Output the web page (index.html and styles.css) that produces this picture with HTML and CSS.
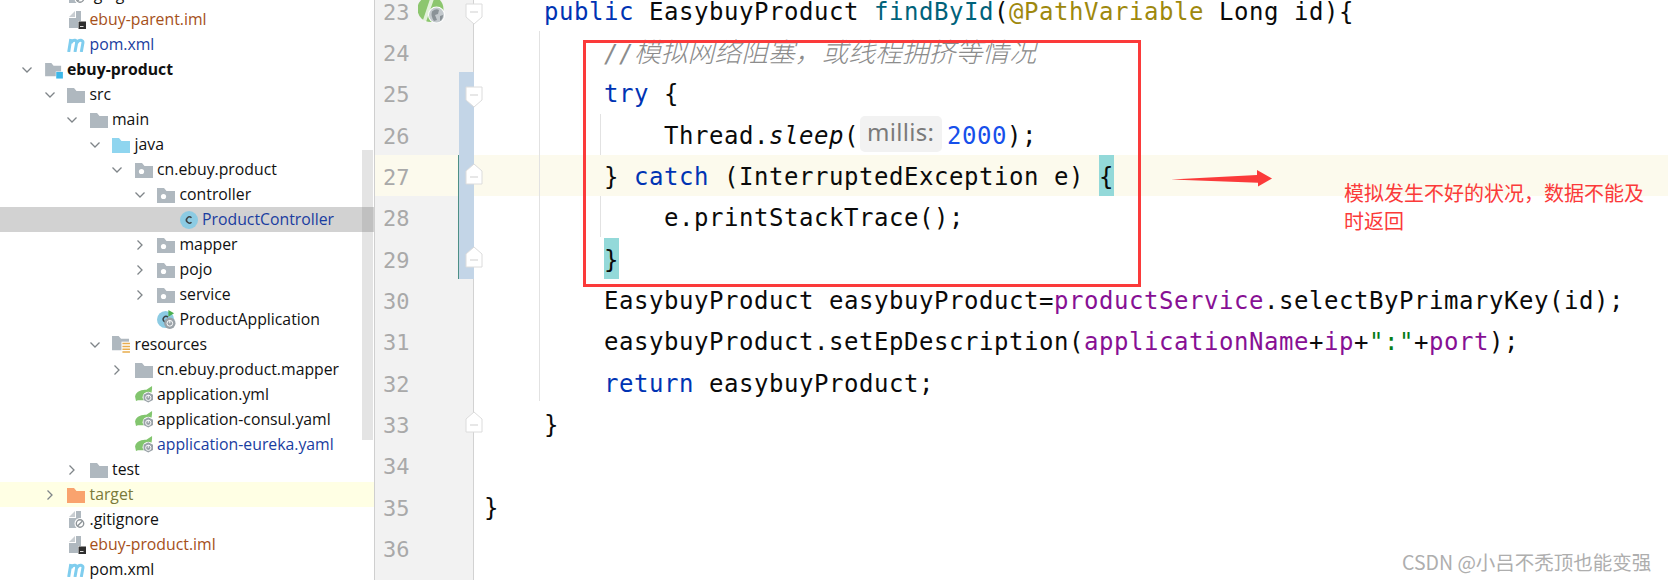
FILE: index.html
```html
<!DOCTYPE html>
<html lang="zh-CN">
<head>
<meta charset="utf-8">
<title>ProductController</title>
<link rel="stylesheet" href="styles.css">
</head>
<body>
<svg class="sprite" aria-hidden="true">
  <symbol id="open" viewBox="0 0 10 10"><path d="M.5 2.5 5 7 9.500 2.500" fill="none" stroke="#7f8589" stroke-width="1.300"/></symbol>
  <symbol id="closed" viewBox="0 0 10 10"><path d="M2.500.5 7 5 2.500 9.500" fill="none" stroke="#7f8589" stroke-width="1.300"/></symbol>
  <symbol id="folder" viewBox="0 0 18 16"><path d="M0 1h7l2.500 3H18v12H0z" fill="#afb8bf"/></symbol>
  <symbol id="module" viewBox="0 0 20 18"><path d="M0 0h7l2.500 3H18v12H0z" fill="#afb8bf"/><rect x="12" y="9.500" width="8" height="8" fill="#fff"/><rect x="12.500" y="10" width="7.500" height="7.500" fill="#3db7e8"/></symbol>
  <symbol id="java" viewBox="0 0 18 16"><path d="M0 1h7l2.500 3H18v12H0z" fill="#8fd5ef"/></symbol>
  <symbol id="target" viewBox="0 0 18 16"><path d="M0 1h7l2.500 3H18v12H0z" fill="#f9a36e"/></symbol>
  <symbol id="package" viewBox="0 0 18 16"><path d="M0 1h7l2.500 3H18v12H0z" fill="#afb8bf"/><circle cx="6.500" cy="9.500" r="2.600" fill="#fff"/></symbol>
  <symbol id="res" viewBox="0 0 19 18"><path d="M0 0h7l2.500 3H18v12H0z" fill="#afb8bf"/><rect x="10" y="6" width="9" height="12" fill="#fff"/><path d="M11 8h8M11 11h8M11 14h8M11 17h8" stroke="#e8ad4e" stroke-width="1.600"/></symbol>
  <symbol id="file" viewBox="0 0 17 18"><path d="M0 6 6 0v6z" fill="#c9ced2"/><path d="M7 0h5v17H0V7h7z" fill="#afb8bf"/><rect x="9" y="10" width="8" height="8" fill="#fff"/><rect x="9.500" y="10.500" width="7.500" height="7.500" fill="#2f2f2f"/><rect x="11" y="15" width="3.500" height="1" fill="#ddd"/></symbol>
  <symbol id="ignore" viewBox="0 0 17 18"><path d="M0 6 6 0v6z" fill="#c9ced2"/><path d="M7 0h5v17H0V7h7z" fill="#afb8bf"/><circle cx="11" cy="12.500" r="5.500" fill="#fff"/><circle cx="11" cy="12.500" r="3.700" fill="none" stroke="#8e9498" stroke-width="1.400"/><path d="m8.500 15 5-5" stroke="#8e9498" stroke-width="1.400"/></symbol>
  <symbol id="maven" viewBox="0 0 19 14"><path d="M1.700 14 3.800 1M3.800 5Q5.500 2 8 2.300 10 2.800 9.500 5.500L8 14M9.800 5Q11.500 2 14 2.300 16.500 2.800 15.800 5.500L14.300 14" fill="none" stroke="#7fcdee" stroke-width="3"/></symbol>
  <symbol id="cls" viewBox="0 0 18 18"><circle cx="9" cy="9" r="9" fill="#8ccbe3"/><path d="M11.500 6.800A3 3 0 1 0 11.500 11.200" fill="none" stroke="#3d4245" stroke-width="1.500"/></symbol>
  <symbol id="app" viewBox="0 0 20 20"><circle cx="9" cy="10" r="9" fill="#8ccbe3"/><path d="M11.500 7.500A3 3 0 1 0 11.500 12" fill="none" stroke="#3d4245" stroke-width="1.500"/><path d="M12 0v7l6-3.500z" fill="#4caf50"/><circle cx="13.500" cy="14" r="6" fill="#9aa2a8"/><circle cx="13.500" cy="14" r="3" fill="none" stroke="#fff" stroke-width="1"/><path d="M13.500 11v3" stroke="#fff"/></symbol>
  <symbol id="yaml" viewBox="0 0 20 18"><path d="M0 11C1 5 8 4 12 4L18 0C18.500 8 15 15 9 15H3L1 16z" fill="#82c56e"/><circle cx="14" cy="12" r="6" fill="#fff"/><path d="M14 6.500 19 9.200v5.600L14 17.500 9 14.800V9.200z" fill="#9aa2a8"/><circle cx="14" cy="12.500" r="2.800" fill="none" stroke="#fff"/><path d="M14 9.500v3" stroke="#fff"/></symbol>
  <symbol id="fold-down" viewBox="0 0 18 22"><path d="M1 1h16v13l-8 7-8-7z" fill="#fff" stroke="#dcdcdc"/><path d="M5 9h8" stroke="#cfcfcf"/></symbol>
  <symbol id="fold-up" viewBox="0 0 18 22"><path d="M1 21h16V8L9 1 1 8z" fill="#fff" stroke="#dcdcdc"/><path d="M5 14h8" stroke="#cfcfcf"/></symbol>
  <symbol id="web" viewBox="0 0 27 30"><circle cx="12.500" cy="13" r="13" fill="#8cc66e"/><path d="M13 0 17 0 8 26 5 24z" fill="#fff" opacity=".75"/><circle cx="18.500" cy="19" r="8.500" fill="#fff"/><circle cx="18.500" cy="19" r="7.500" fill="#c3c9cd"/><path d="M14 15.500Q18 12 21 14L20 18 17 19 19 24 16 25Q12.500 20 14 15.500zM22 20l3-1Q25 23 22 25z" fill="#8a9297"/></symbol>
</svg>

<main class="window">
  <nav class="tree">
    <div class="row d1"><span class="chev"></span><svg class="icon ic-file"><use href="#ignore"/></svg><span>.gitignore</span></div>
    <div class="row d1"><span class="chev"></span><svg class="icon ic-file"><use href="#file"/></svg><span class="t-ignored">ebuy-parent.iml</span></div>
    <div class="row d1"><span class="chev"></span><svg class="icon ic-maven"><use href="#maven"/></svg><span class="t-mod">pom.xml</span></div>
    <div class="row d0"><svg class="chev"><use href="#open"/></svg><svg class="icon ic-module"><use href="#module"/></svg><span class="t-bold">ebuy-product</span></div>
    <div class="row d1"><svg class="chev"><use href="#open"/></svg><svg class="icon ic-folder"><use href="#folder"/></svg><span>src</span></div>
    <div class="row d2"><svg class="chev"><use href="#open"/></svg><svg class="icon ic-folder"><use href="#folder"/></svg><span>main</span></div>
    <div class="row d3"><svg class="chev"><use href="#open"/></svg><svg class="icon ic-folder"><use href="#java"/></svg><span>java</span></div>
    <div class="row d4"><svg class="chev"><use href="#open"/></svg><svg class="icon ic-folder"><use href="#package"/></svg><span>cn.ebuy.product</span></div>
    <div class="row d5"><svg class="chev"><use href="#open"/></svg><svg class="icon ic-folder"><use href="#package"/></svg><span>controller</span></div>
    <div class="row d6 selected"><span class="chev"></span><svg class="icon ic-cls"><use href="#cls"/></svg><span class="t-mod">ProductController</span></div>
    <div class="row d5"><svg class="chev"><use href="#closed"/></svg><svg class="icon ic-folder"><use href="#package"/></svg><span>mapper</span></div>
    <div class="row d5"><svg class="chev"><use href="#closed"/></svg><svg class="icon ic-folder"><use href="#package"/></svg><span>pojo</span></div>
    <div class="row d5"><svg class="chev"><use href="#closed"/></svg><svg class="icon ic-folder"><use href="#package"/></svg><span>service</span></div>
    <div class="row d5"><span class="chev"></span><svg class="icon ic-app"><use href="#app"/></svg><span>ProductApplication</span></div>
    <div class="row d3"><svg class="chev"><use href="#open"/></svg><svg class="icon ic-res"><use href="#res"/></svg><span>resources</span></div>
    <div class="row d4"><svg class="chev"><use href="#closed"/></svg><svg class="icon ic-folder"><use href="#folder"/></svg><span>cn.ebuy.product.mapper</span></div>
    <div class="row d4"><span class="chev"></span><svg class="icon ic-yaml"><use href="#yaml"/></svg><span>application.yml</span></div>
    <div class="row d4"><span class="chev"></span><svg class="icon ic-yaml"><use href="#yaml"/></svg><span>application-consul.yaml</span></div>
    <div class="row d4"><span class="chev"></span><svg class="icon ic-yaml"><use href="#yaml"/></svg><span class="t-mod">application-eureka.yaml</span></div>
    <div class="row d2"><svg class="chev"><use href="#closed"/></svg><svg class="icon ic-folder"><use href="#folder"/></svg><span>test</span></div>
    <div class="row d1 excluded"><svg class="chev"><use href="#closed"/></svg><svg class="icon ic-folder"><use href="#target"/></svg><span class="t-excl">target</span></div>
    <div class="row d1"><span class="chev"></span><svg class="icon ic-file"><use href="#ignore"/></svg><span>.gitignore</span></div>
    <div class="row d1"><span class="chev"></span><svg class="icon ic-file"><use href="#file"/></svg><span class="t-ignored">ebuy-product.iml</span></div>
    <div class="row d1"><span class="chev"></span><svg class="icon ic-maven"><use href="#maven"/></svg><span>pom.xml</span></div>
    <div class="scrollbar"></div>
  </nav>

  <section class="editor">
    <div class="line"><div class="gutter"><span class="num">23</span><svg class="run-mark"><use href="#web"/></svg><svg class="fold down"><use href="#fold-down"/></svg></div><pre class="code">    <b class="kw">public</b> EasybuyProduct <b class="fn">findById</b>(<b class="ann">@PathVariable</b> Long id){</pre></div>
    <div class="line"><div class="gutter"><span class="num">24</span></div><pre class="code">        <i class="comment">//<span class="cjk">模拟网络阻塞&#xFF0C;或线程拥挤等情况</span></i></pre></div>
    <div class="line"><div class="gutter"><span class="num">25</span><span class="bar"></span><svg class="fold down"><use href="#fold-down"/></svg></div><pre class="code">        <b class="kw">try</b> {</pre></div>
    <div class="line"><div class="gutter"><span class="num">26</span><span class="bar"></span></div><pre class="code">            Thread.<i>sleep</i>(<span class="hint">millis:</span><b class="lit">2000</b>);</pre></div>
    <div class="line current"><div class="gutter"><span class="num">27</span><span class="bar edited"></span><svg class="fold up"><use href="#fold-up"/></svg></div><pre class="code">        } <b class="kw">catch</b> (InterruptedException e) <span class="match">{</span></pre></div>
    <div class="line"><div class="gutter"><span class="num">28</span><span class="bar edited"></span></div><pre class="code">            e.printStackTrace();</pre></div>
    <div class="line"><div class="gutter"><span class="num">29</span><span class="bar edited"></span><svg class="fold up"><use href="#fold-up"/></svg></div><pre class="code">        <span class="match">}</span></pre></div>
    <div class="line"><div class="gutter"><span class="num">30</span></div><pre class="code">        EasybuyProduct easybuyProduct=<b class="field">productService</b>.selectByPrimaryKey(id);</pre></div>
    <div class="line"><div class="gutter"><span class="num">31</span></div><pre class="code">        easybuyProduct.setEpDescription(<b class="field">applicationName</b>+<b class="field">ip</b>+<b class="str">":"</b>+<b class="field">port</b>);</pre></div>
    <div class="line"><div class="gutter"><span class="num">32</span></div><pre class="code">        <b class="kw">return</b> easybuyProduct;</pre></div>
    <div class="line"><div class="gutter"><span class="num">33</span><svg class="fold up"><use href="#fold-up"/></svg></div><pre class="code">    }</pre></div>
    <div class="line"><div class="gutter"><span class="num">34</span></div><pre class="code"></pre></div>
    <div class="line"><div class="gutter"><span class="num">35</span></div><pre class="code">}</pre></div>
    <div class="line"><div class="gutter"><span class="num">36</span></div><pre class="code"></pre></div>
    <div class="line"><div class="gutter"></div><pre class="code"></pre></div>

    <span class="guide guide-method"></span>
    <span class="guide guide-try"></span>
    <span class="guide guide-catch"></span>
  </section>

  <div class="redbox"></div>
  <svg class="arrow" viewBox="0 0 102 17" aria-hidden="true"><path d="M0 9.500 86 5V0L101 8.500 87 16.500V12.800z" fill="#fb3a3a"/></svg>
  <p class="note">模拟发生不好的状况&#xFF0C;数据不能及<br>时返回</p>
  <p class="mark">CSDN @小吕不秃顶也能变强</p>
</main>
</body>
</html>
```

FILE: styles.css
```css
* { box-sizing: border-box; }
html, body { margin: 0; height: 100%; background: #fff; }
body { overflow: hidden; }
.sprite { display: none; }

.window {
  position: relative;
  display: flex;
  width: 1668px;
  height: 580px;
  overflow: hidden;
}

/* project tree */
.tree {
  position: relative;
  flex: 0 0 375px;
  height: 580px;
  border-right: 1px solid #cfcfcf;
  font: 15.800px/25px "Open Sans", "Noto Sans", sans-serif;
  color: #111;
  overflow: hidden;
}
.row {
  display: flex;
  align-items: center;
  height: 25px;
  white-space: nowrap;
}
.row:first-child { margin-top: -18px; }
.d0 { padding-left: 22px; }
.d1 { padding-left: 44.5px; }
.d2 { padding-left: 67px; }
.d3 { padding-left: 89.500px; }
.d4 { padding-left: 112px; }
.d5 { padding-left: 134.500px; }
.d6 { padding-left: 157px; }

.chev { flex: 0 0 10px; width: 10px; height: 10px; margin-right: 12.500px; }
.icon { flex: 0 0 auto; margin-right: 4.500px; }
.ic-folder { width: 18px; height: 16px; }
.ic-module { width: 18px; height: 16px; margin-top: 3px; }
.ic-file { width: 17px; height: 18px; margin-left: 2px; margin-right: 3.500px; }
.ic-maven { width: 19px; height: 14px; margin-right: 3.500px; }
.ic-cls { width: 18px; height: 18px; }
.ic-app { width: 19px; height: 19px; margin-right: 3.500px; }
.ic-res { width: 18px; height: 17px; }
.ic-yaml { width: 19px; height: 17px; margin-right: 3.500px; }

.selected { background: #d2d2d2; }
.excluded { background: #ffffe4; }
.t-bold { font-weight: 700; color: #111; }
.t-mod { color: #1a3da0; }
.t-ignored { color: #a5501a; }
.t-excl { color: #7a7a3a; }

.scrollbar {
  position: absolute;
  top: 150px;
  right: 1px;
  width: 11px;
  height: 290px;
  background: rgba(120, 120, 120, .2);
}

/* editor */
.editor {
  position: relative;
  flex: 1 1 auto;
  min-width: 0;
  height: 580px;
}
.line {
  display: flex;
  height: 41.333px;
}
.line:first-child { margin-top: -10.333px; }
.gutter {
  position: relative;
  flex: 0 0 99px;
  height: 100%;
  padding-left: 8px;
  background: #f2f2f2;
  border-right: 1px solid #d2d2d2;
}
.num {
  font: 22px/45.333px "DejaVu Sans Mono", monospace;
  color: #a9a9a9;
}
.code {
  flex: 1 1 auto;
  margin: 0;
  padding-left: 10px;
  font: 24px/45.333px "DejaVu Sans Mono", monospace;
  letter-spacing: .55px;
  color: #0a0a0a;
  white-space: pre;
}
.code b { font-weight: 400; }
.kw { color: #0033b3; }
.fn { color: #00627a; }
.ann { color: #9e880d; }
.lit { color: #1750eb; }
.field { color: #871094; }
.str { color: #067d17; }
.comment { position: relative; top: -3px; color: #8c8c8c; }
.cjk {
  font-family: "Noto Sans CJK SC", sans-serif;
  font-size: 26.800px;
  letter-spacing: 0;
  font-weight: 300;
}
.hint {
  position: relative;
  top: 2.500px;
  display: inline-block;
  height: 36px;
  width: 82px;
  margin: 0 5px 0 1px;
  padding-left: 7px;
  border-radius: 5px;
  background: #f2f2f2;
  color: #7a7a7a;
  font: 24px/32px "Noto Sans", sans-serif;
  letter-spacing: .3px;
  vertical-align: top;
}
.match {
  display: inline-block;
  height: 41.333px;
  background: #93d9d9;
  vertical-align: top;
}
.current { background: #fcfaed; }
.current .gutter { background: #fcfaed; }

.bar {
  position: absolute;
  top: 0;
  right: -1px;
  width: 15px;
  height: 100%;
  background: #c3d5e7;
}
.edited { box-shadow: -1px 0 0 #4d8f86; }

.fold { position: absolute; right: -10px; width: 18px; height: 22px; z-index: 1; }
.fold.down { top: 13.500px; }
.fold.up { top: 8px; }

.run-mark { position: absolute; left: 43px; top: 6px; width: 27px; height: 30px; }

.guide { position: absolute; width: 1px; background: #e2e2e2; }
.guide-method { left: 164px; top: 31px; height: 370px; }
.guide-try { left: 225px; top: 114px; height: 41px; }
.guide-catch { left: 225px; top: 196px; height: 41px; }

/* annotations */
.redbox {
  position: absolute;
  left: 583px;
  top: 40px;
  width: 558px;
  height: 247px;
  border: 3px solid #fb3a3a;
}
.arrow {
  position: absolute;
  left: 1171px;
  top: 170px;
  width: 102px;
  height: 17px;
}
.note {
  position: absolute;
  left: 1344px;
  top: 179px;
  margin: 0;
  font: 20px/28px "Noto Sans CJK SC", sans-serif;
  color: #fb3a3a;
  white-space: nowrap;
}
.mark {
  position: absolute;
  left: 1402px;
  top: 548px;
  margin: 0;
  font: 19.500px/28px "Noto Sans CJK SC", sans-serif;
  color: #aeaeae;
  white-space: nowrap;
}
```
